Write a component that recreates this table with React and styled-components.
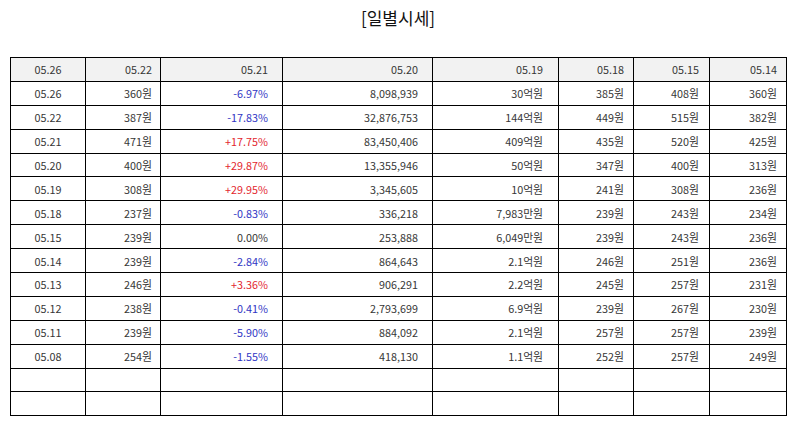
import React from 'react';
import styled, { createGlobalStyle } from 'styled-components';

const GlobalStyle = createGlobalStyle`
  body {
    margin: 0;
    background: #ffffff;
    font-family: "Noto Sans CJK KR", "Noto Sans", sans-serif;
    color: #333;
  }
`;

const Page = styled.div`
  width: 794px;
  height: 425px;
  padding: 5px 8px 0 10px;
  box-sizing: border-box;
`;

const Title = styled.h2`
  margin: 0 0 27px;
  text-align: center;
  font-size: 17px;
  font-weight: 400;
  line-height: 25px;
  color: #111;
`;

const Table = styled.table`
  width: 776px;
  border-collapse: collapse;
  table-layout: fixed;
  font-size: 10.8px;
`;

const Cell = styled.td`
  height: 22.9px;
  padding: 0 ${(p) => (p.$center ? 0 : p.$pad)}px 0 0;
  border: 1px solid #000;
  text-align: ${(p) => (p.$center ? 'center' : 'right')};
  color: ${(p) => (p.$tone === 'up' ? '#e3262e' : p.$tone === 'down' ? '#3035c4' : '#363636')};
  background: ${(p) => (p.$head ? '#f2f2f2' : '#fff')};
  font-weight: 400;
  white-space: nowrap;
`;

const widths = [75, 75, 122, 150, 126, 75, 76, 77];
const pads = [0, 8, 14, 14, 15, 9, 10, 9];

const head = ['05.26', '05.22', '05.21', '05.20', '05.19', '05.18', '05.15', '05.14'];

const rows = [
  ['05.26', '360원', '-6.97%', '8,098,939', '30억원', '385원', '408원', '360원'],
  ['05.22', '387원', '-17.83%', '32,876,753', '144억원', '449원', '515원', '382원'],
  ['05.21', '471원', '+17.75%', '83,450,406', '409억원', '435원', '520원', '425원'],
  ['05.20', '400원', '+29.87%', '13,355,946', '50억원', '347원', '400원', '313원'],
  ['05.19', '308원', '+29.95%', '3,345,605', '10억원', '241원', '308원', '236원'],
  ['05.18', '237원', '-0.83%', '336,218', '7,983만원', '239원', '243원', '234원'],
  ['05.15', '239원', '0.00%', '253,888', '6,049만원', '239원', '243원', '236원'],
  ['05.14', '239원', '-2.84%', '864,643', '2.1억원', '246원', '251원', '236원'],
  ['05.13', '246원', '+3.36%', '906,291', '2.2억원', '245원', '257원', '231원'],
  ['05.12', '238원', '-0.41%', '2,793,699', '6.9억원', '239원', '267원', '230원'],
  ['05.11', '239원', '-5.90%', '884,092', '2.1억원', '257원', '257원', '239원'],
  ['05.08', '254원', '-1.55%', '418,130', '1.1억원', '252원', '257원', '249원'],
];

const toneOf = (v) => (v.startsWith('+') ? 'up' : v.startsWith('-') ? 'down' : undefined);

export default function App() {
  return (
    <>
      <GlobalStyle />
      <Page>
        <Title>[일별시세]</Title>
        <Table>
          <colgroup>
            {widths.map((w, i) => (
              <col key={i} style={{ width: w }} />
            ))}
          </colgroup>
          <thead>
            <tr>
              {head.map((h, i) => (
                <Cell as="th" key={i} $head $center={i === 0} $pad={pads[i]}>
                  {h}
                </Cell>
              ))}
            </tr>
          </thead>
          <tbody>
            {rows.map((r, ri) => (
              <tr key={ri}>
                {r.map((v, i) => (
                  <Cell key={i} $center={i === 0} $pad={pads[i]} $tone={i === 2 ? toneOf(v) : undefined}>
                    {v}
                  </Cell>
                ))}
              </tr>
            ))}
            {[0, 1].map((k) => (
              <tr key={'e' + k}>
                {widths.map((_, i) => (
                  <Cell key={i} $pad={pads[i]} />
                ))}
              </tr>
            ))}
          </tbody>
        </Table>
      </Page>
    </>
  );
}
